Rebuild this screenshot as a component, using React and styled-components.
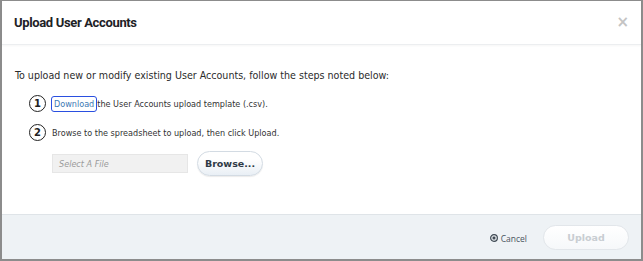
import React from "react";
import styled, { createGlobalStyle } from "styled-components";

const Global = createGlobalStyle`
  html, body { margin: 0; padding: 0; background: #fff; }
  body { width: 643px; height: 261px; overflow: hidden; }
`;

const Modal = styled.div`
  box-sizing: border-box;
  width: 643px;
  height: 261px;
  border: 1px solid #8c8c8c;
  border-left-width: 2px;
  border-right-width: 2px;
  border-bottom-width: 2px;
  display: flex;
  flex-direction: column;
  background: #fff;
`;

const Header = styled.div`
  height: 43px;
  flex: none;
  display: flex;
  align-items: center;
  justify-content: space-between;
  padding: 0 12px 0 12px;
  border-bottom: 1px solid #eceef0;
  box-shadow: 0 1px 2px rgba(0, 0, 0, 0.04);
`;

const Title = styled.h1`
  margin: 0;
  font-family: Roboto, "Open Sans", sans-serif;
  font-weight: 700;
  font-size: 13px;
  letter-spacing: -0.35px;
  color: #1e2226;
`;

const Close = styled.span`
  font-family: "DejaVu Sans", sans-serif;
  font-weight: 700;
  font-size: 15px;
  color: #c4c4c4;
  line-height: 1;
`;

const Body = styled.div`
  flex: 1;
  padding: 23px 13px 0 13px;
  font-family: "DejaVu Sans Condensed", "DejaVu Sans", sans-serif;
  font-stretch: condensed;
  color: #2b2b2b;
`;

const Intro = styled.p`
  margin: 0;
  font-size: 10.6px;
  line-height: 14px;
`;

const Steps = styled.div`
  margin-top: 13px;
  padding-left: 14px;
  display: flex;
  flex-direction: column;
  gap: 12px;
`;

const Step = styled.div`
  display: flex;
  align-items: center;
  gap: 6px;
  font-size: 9px;
  color: #333;
  height: 17px;
`;

const Num = styled.span`
  box-sizing: border-box;
  width: 17px;
  height: 17px;
  border: 1.6px solid #222;
  border-radius: 50%;
  display: inline-flex;
  align-items: center;
  justify-content: center;
  font-family: "DejaVu Sans", sans-serif;
  font-stretch: normal;
  font-weight: 700;
  font-size: 10px;
  color: #222;
  flex: none;
`;

const Link = styled.a`
  color: #3d79b4;
  text-decoration: none;
  outline: 1.5px solid #2a4fe0;
  border-radius: 2px;
  padding: 2px 2px;
  margin-right: 1px;
`;

const FileRow = styled.div`
  display: flex;
  align-items: center;
  gap: 9px;
  margin-top: 10px;
  padding-left: 37px;
`;

const FileInput = styled.div`
  box-sizing: border-box;
  width: 136px;
  height: 19px;
  background: #f1f1f1;
  border: 1px solid #e6e6e6;
  display: flex;
  align-items: center;
  padding-left: 6px;
  font-style: italic;
  font-size: 9px;
  color: #9a9a9a;
`;

const PillButton = styled.button`
  box-sizing: border-box;
  height: ${(p) => p.$h}px;
  width: ${(p) => p.$w}px;
  border-radius: 13px;
  border: 1px solid ${(p) => (p.$disabled ? "#e2e6ea" : "#d3dbe3")};
  background: ${(p) =>
    p.$disabled
      ? "linear-gradient(#ffffff, #f6f8fa)"
      : "linear-gradient(#ffffff 30%, #e9eff5)"};
  box-shadow: ${(p) => (p.$disabled ? "none" : "0 1px 1px rgba(0,0,0,0.08)")};
  font-family: "DejaVu Sans", sans-serif;
  font-weight: 700;
  font-size: 9.5px;
  color: ${(p) => (p.$disabled ? "#c8cdd2" : "#2f3a46")};
  padding: 0;
  cursor: pointer;
`;

const Footer = styled.div`
  height: 44px;
  flex: none;
  background: #eef2f5;
  border-top: 1px solid #dfe4e8;
  display: flex;
  align-items: center;
  justify-content: flex-end;
  padding: 0 12px 0 0;
  gap: 16px;
`;

const Cancel = styled.span`
  display: inline-flex;
  align-items: center;
  gap: 3px;
  font-family: "Open Sans", sans-serif;
  font-size: 8.5px;
  color: #4a5560;
  margin-top: 2px;
`;

export default function App() {
  return (
    <>
      <Global />
      <Modal>
        <Header>
          <Title>Upload User Accounts</Title>
          <Close>×</Close>
        </Header>
        <Body>
          <Intro>
            To upload new or modify existing User Accounts, follow the steps noted below:
          </Intro>
          <Steps>
            <Step>
              <Num>1</Num>
              <span>
                <Link href="#">Download</Link>the User Accounts upload template (.csv).
              </span>
            </Step>
            <Step>
              <Num>2</Num>
              <span>Browse to the spreadsheet to upload, then click Upload.</span>
            </Step>
          </Steps>
          <FileRow>
            <FileInput>Select A File</FileInput>
            <PillButton $w={66} $h={25}>Browse...</PillButton>
          </FileRow>
        </Body>
        <Footer>
          <Cancel>
            <svg width="8" height="8" viewBox="0 0 10 10">
              <circle cx="5" cy="5" r="4.2" fill="none" stroke="#3e4852" strokeWidth="1.5" />
              <path d="M3.4 3.4 L6.6 6.6 M6.6 3.4 L3.4 6.6" stroke="#3e4852" strokeWidth="1.6" />
            </svg>
            Cancel
          </Cancel>
          <PillButton $w={86} $h={25} $disabled>Upload</PillButton>
        </Footer>
      </Modal>
    </>
  );
}
